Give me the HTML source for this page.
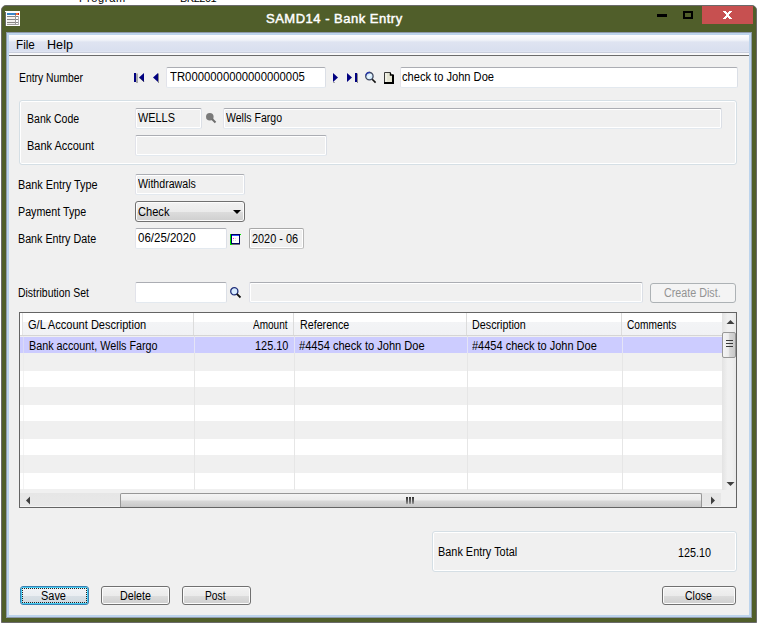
<!DOCTYPE html>
<html><head><meta charset="utf-8">
<style>
*{box-sizing:border-box;margin:0;padding:0}
html,body{width:760px;height:637px;overflow:hidden;background:#fff;position:relative}
body{font-family:"Liberation Sans",sans-serif}
.a{position:absolute}
.t{position:absolute;font-size:11px;line-height:13px;white-space:nowrap;color:#000}
.t.s{font-size:12px;transform-origin:0 0}
.frame{left:1px;top:5px;width:756px;height:618px;background:#505e2a;border:1px solid #6a6a6a;border-radius:5px 5px 0 0}
.client{left:6px;top:32px;width:746px;height:586px;background:#f0f0f0;border:1px solid #8e9aab}
.client-in{left:7px;top:33px;width:744px;height:584px;border:2px solid #bdd4ec}
.menu{left:9px;top:35px;width:740px;height:20px;background:linear-gradient(#fdfdfe 0,#f1f3f9 5px,#dfe4f1 7px,#d9dfef 16px,#e4e8f3 17px,#c9cedc 17px,#c9cedc 18px,#f8f8fa 18px)}
.tb{position:absolute;background:#fff;border:1px solid #abadb3;border-left-color:#e2e3ea;border-right-color:#dbdfe6;border-bottom-color:#e3e9ef;border-radius:2px;box-shadow:inset 0 0 0 1px #fff}
.tb.dis{background:#f0f0f0}
.grp{position:absolute;border:1px solid #d5dfe5;border-radius:3px;box-shadow:inset 0 0 0 1px #fff}
.btn{position:absolute;border:1px solid #707070;border-radius:3px;background:linear-gradient(#f2f2f2 0,#ebebeb 50%,#dddddd 50%,#cfcfcf 100%);box-shadow:inset 0 0 0 1px #fcfcfc}
</style></head><body>

<!-- background window text fragment -->
<div class="t" style="left:79px;top:-8px;color:#000;letter-spacing:0.65px">Program</div>
<div class="t" style="left:180px;top:-8px;color:#000;letter-spacing:-0.5px">BK2201</div>

<!-- window frame -->
<div class="a frame"></div>
<div class="a client"></div>
<div class="a client-in"></div>

<!-- title bar -->
<svg class="a" style="left:5px;top:11px" width="16" height="16" viewBox="0 0 16 16" shape-rendering="crispEdges">
 <rect x="0" y="0" width="15" height="15" fill="#fdfdfd"/>
 <rect x="0" y="1" width="1" height="14" fill="#6a6a6a"/>
 <rect x="2" y="2" width="8" height="2" fill="#3a86c8"/>
 <rect x="10" y="2" width="1" height="2" fill="#5a60a0"/>
 <rect x="11" y="2" width="2" height="2" fill="#f07a30"/>
 <rect x="13" y="2" width="1" height="2" fill="#d01818"/>
 <rect x="2" y="6" width="8" height="2" fill="#f6f2ee"/>
 <rect x="2" y="9" width="8" height="2" fill="#f2f0ee"/>
 <rect x="2" y="12" width="8" height="1" fill="#eeeeee"/>
 <rect x="2" y="5" width="12" height="1" fill="#8a8684"/>
 <rect x="2" y="8" width="12" height="1" fill="#8a8684"/>
 <rect x="2" y="11" width="12" height="1" fill="#8a8684"/>
 <rect x="2" y="13" width="12" height="1" fill="#a09c9a"/>
 <rect x="10" y="4" width="1" height="10" fill="#9a9a9a"/>
 <rect x="13" y="5" width="1" height="9" fill="#b0b0b0"/>
</svg>
<div class="a" style="left:657px;top:14px;width:10px;height:3px;background:#000"></div>
<div class="a" style="left:683px;top:11px;width:10px;height:8px;border:2px solid #000;border-width:2px 2px 2px 2px"></div>
<div class="a" style="left:702px;top:6px;width:51px;height:18px;background:#c75050"></div>
<svg class="a" style="left:723px;top:11px" width="9" height="8" viewBox="0 0 9 8" shape-rendering="crispEdges" fill="#fff"><rect x="0" y="0" width="3" height="1"/><rect x="6" y="0" width="3" height="1"/><rect x="1" y="1" width="3" height="1"/><rect x="5" y="1" width="3" height="1"/><rect x="2" y="2" width="5" height="1"/><rect x="3" y="3" width="3" height="1"/><rect x="3" y="4" width="3" height="1"/><rect x="2" y="5" width="5" height="1"/><rect x="1" y="6" width="3" height="1"/><rect x="5" y="6" width="3" height="1"/><rect x="0" y="7" width="3" height="1"/><rect x="6" y="7" width="3" height="1"/></svg>
<div class="t" style="left:266px;top:11px;font-size:13px;line-height:15px;color:#fff;letter-spacing:0.5px;-webkit-text-stroke:0.45px #fff">SAMD14 - Bank Entry</div>

<!-- menu -->
<div class="a menu"></div>
<div class="a" style="left:9px;top:55px;width:740px;height:1px;background:#6b6b6b"></div>
<div class="t s" style="left:15.53px;top:39px;transform:scaleX(0.9722)">File</div>
<div class="t s" style="left:47.35px;top:39px;transform:scaleX(1.0522)">Help</div>

<!-- Entry number row -->
<div class="t s" style="left:18.64px;top:72px;transform:scaleX(0.8644)">Entry Number</div>
<svg class="a" style="left:133px;top:72px" width="14" height="12" viewBox="0 0 14 12">
 <rect x="3" y="1.5" width="2" height="9.5" fill="#a8a8a8"/>
 <rect x="1" y="1" width="2" height="9" fill="#000080"/>
 <polygon points="11,1 11,10 6,5.5" fill="#000080"/>
 <polygon points="11,10 6,5.5 6.5,5.5 11.5,10" fill="#303030"/>
</svg>
<svg class="a" style="left:151px;top:72px" width="10" height="12" viewBox="0 0 10 12">
 <polygon points="7,1 7,10 2,5.5" fill="#000080"/>
 <rect x="7" y="1.5" width="1" height="9.5" fill="#8a8a8a"/>
</svg>
<div class="tb" style="left:166px;top:67px;width:160px;height:21px"></div>
<div class="t s" style="left:170.00px;top:71px;transform:scaleX(0.9437)">TR0000000000000000005</div>
<svg class="a" style="left:332px;top:72px" width="8" height="12" viewBox="0 0 8 12">
 <polygon points="1,1 1,10 6,5.5" fill="#000080"/>
 <rect x="1.5" y="10" width="1" height="1" fill="#606060"/>
</svg>
<svg class="a" style="left:346px;top:72px" width="14" height="12" viewBox="0 0 14 12">
 <polygon points="1,1 1,10 6,5.5" fill="#000080"/>
 <rect x="9" y="1" width="2" height="9" fill="#000080"/>
 <rect x="11" y="1.5" width="1" height="9.5" fill="#8a8a8a"/>
</svg>
<svg class="a" style="left:364px;top:71px" width="13" height="13" viewBox="0 0 13 13">
 <circle cx="5.4" cy="5.2" r="3.7" fill="#d4ecfc" stroke="#404860" stroke-width="1.3"/>
 <path d="M2 4.5 A3.7 3.7 0 0 1 6 1.5" fill="none" stroke="#2838b0" stroke-width="1.3"/>
 <path d="M4 6.5 L7 3.5" stroke="#fff" stroke-width="1.2" opacity=".8"/>
 <line x1="8.2" y1="8.2" x2="11.6" y2="11.6" stroke="#111" stroke-width="1.6"/>
</svg>
<svg class="a" style="left:383px;top:71px" width="12" height="14" viewBox="0 0 12 14">
 <path d="M1.5 1.5 H7.5 L10 4 V12 H1.5 Z" fill="#e4e4d2"/>
 <rect x="2" y="2" width="2" height="9" fill="#f0f0e6"/>
 <path d="M1.5 11.5 V1.5 H7.5" fill="none" stroke="#3a3a3a" stroke-width="1"/>
 <path d="M7.5 1.5 V4 H10" fill="none" stroke="#000" stroke-width="1.4"/>
 <path d="M8.3 1.2 L10.6 3.5" stroke="#fff" stroke-width="1.2"/>
 <path d="M10 3.5 V12 H1" fill="none" stroke="#000" stroke-width="2"/>
</svg>
<div class="tb" style="left:400px;top:67px;width:338px;height:21px"></div>
<div class="t s" style="left:401.67px;top:71px;transform:scaleX(0.9255)">check to John Doe</div>

<!-- Bank group -->
<div class="grp" style="left:19px;top:100px;width:718px;height:65px"></div>
<div class="t s" style="left:27.12px;top:113px;transform:scaleX(0.8793)">Bank Code</div>
<div class="tb dis" style="left:135px;top:108px;width:67px;height:21px"></div>
<div class="t s" style="left:138.00px;top:112px;transform:scaleX(0.9075)">WELLS</div>
<svg class="a" style="left:205px;top:112px" width="12" height="12" viewBox="0 0 12 12">
 <circle cx="4.8" cy="4.8" r="3.8" fill="#7a7a7a"/>
 <line x1="7" y1="7" x2="10.5" y2="10.5" stroke="#6e6e6e" stroke-width="2"/>
</svg>
<div class="tb dis" style="left:223px;top:108px;width:499px;height:21px"></div>
<div class="t s" style="left:226.00px;top:112px;transform:scaleX(0.8778)">Wells Fargo</div>
<div class="t s" style="left:27.09px;top:140px;transform:scaleX(0.9139)">Bank Account</div>
<div class="tb dis" style="left:135px;top:135px;width:192px;height:21px"></div>

<!-- Bank entry type etc -->
<div class="t s" style="left:18.39px;top:179px;transform:scaleX(0.9058)">Bank Entry Type</div>
<div class="tb dis" style="left:135px;top:174px;width:110px;height:21px"></div>
<div class="t s" style="left:138.00px;top:178px;transform:scaleX(0.8846)">Withdrawals</div>

<div class="t s" style="left:18.41px;top:206px;transform:scaleX(0.8907)">Payment Type</div>
<div class="btn" style="left:135px;top:201px;width:110px;height:21px"></div>
<div class="t s" style="left:137.68px;top:206px;transform:scaleX(0.9242)">Check</div>
<svg class="a" style="left:232px;top:209px" width="10" height="7" viewBox="0 0 10 7">
 <polygon points="1,1 9,1 5,5" fill="#000"/>
</svg>

<div class="t s" style="left:18.41px;top:233px;transform:scaleX(0.8942)">Bank Entry Date</div>
<div class="tb" style="left:135px;top:228px;width:92px;height:21px"></div>
<div class="t s" style="left:138.00px;top:232px;transform:scaleX(0.9583)">06/25/2020</div>
<svg class="a" style="left:230px;top:234px" width="11" height="11" viewBox="0 0 11 11">
 <rect x="0" y="0" width="11" height="11" fill="#00e000"/>
 <rect x="1" y="0" width="9" height="10" fill="#000060"/>
 <rect x="2" y="1" width="7" height="1" fill="#3050ff"/>
 <rect x="2" y="2" width="7" height="7" fill="#fff"/>
 <rect x="3" y="4" width="1" height="1" fill="#ff00ff"/>
 <rect x="5" y="4" width="1" height="1" fill="#ddd"/>
 <rect x="3" y="6" width="1" height="1" fill="#ddd"/>
 <rect x="5" y="6" width="1" height="1" fill="#ddd"/>
 <rect x="10" y="1" width="1" height="10" fill="#f0f0f0"/>
 <rect x="1" y="10" width="10" height="1" fill="#f0f0f0"/>
 <rect x="10" y="0" width="1" height="1" fill="#00e000"/>
 <rect x="0" y="10" width="2" height="1" fill="#00e000"/>
 <rect x="2" y="10" width="8" height="1" fill="#707070"/>
</svg>
<div class="tb dis" style="left:249px;top:228px;width:55px;height:21px;border-color:#a8a8a8;border-bottom-color:#c8c8c8;border-right-color:#b8b8b8"></div>
<div class="t s" style="left:252.09px;top:233px;transform:scaleX(0.9082)">2020 - 06</div>

<!-- Distribution set -->
<div class="t s" style="left:18.43px;top:287px;transform:scaleX(0.8713)">Distribution Set</div>
<div class="tb" style="left:135px;top:282px;width:92px;height:21px"></div>
<svg class="a" style="left:229px;top:286px" width="13" height="13" viewBox="0 0 13 13">
 <circle cx="5.3" cy="5.3" r="3.6" fill="#d8ecff" stroke="#22307a" stroke-width="1.3"/>
 <line x1="7.8" y1="7.8" x2="11.5" y2="11.5" stroke="#111" stroke-width="1.8"/>
</svg>
<div class="tb dis" style="left:249px;top:282px;width:394px;height:21px"></div>
<div class="btn" style="left:650px;top:283px;width:86px;height:20px;border-color:#adb2b5;background:#f4f4f4;box-shadow:none"></div>
<div class="t s" style="left:663.80px;top:287px;transform:scaleX(0.8951);color:#939393">Create Dist.</div>

<!-- Grid -->
<div class="a" style="left:19px;top:312px;width:718px;height:196px;border:1px solid #646464;background:#f0f0f0"></div>
<!-- header -->
<div class="a" style="left:20px;top:313px;width:702px;height:23px;background:linear-gradient(#ffffff 0,#ffffff 9px,#f3f4f6 9px,#f1f2f4 22px,#d5d5d5 22px)"></div>
<div class="a" style="left:20px;top:313px;width:2px;height:22px;background:#fff"></div>
<div class="a" style="left:22px;top:313px;width:1px;height:22px;background:#e4e4e4"></div>
<div class="a" style="left:193px;top:313px;width:1px;height:22px;background:#dcdcdc"></div>
<div class="a" style="left:293px;top:313px;width:1px;height:22px;background:#dcdcdc"></div>
<div class="a" style="left:466px;top:313px;width:1px;height:22px;background:#dcdcdc"></div>
<div class="a" style="left:621px;top:313px;width:1px;height:22px;background:#dcdcdc"></div>
<div class="t s" style="left:28.08px;top:319px;transform:scaleX(0.9213)">G/L Account Description</div>
<div class="t s" style="left:252.60px;top:319px;transform:scaleX(0.8341)">Amount</div>
<div class="t s" style="left:299.81px;top:319px;transform:scaleX(0.8907)">Reference</div>
<div class="t s" style="left:472.30px;top:319px;transform:scaleX(0.8966)">Description</div>
<div class="t s" style="left:626.75px;top:319px;transform:scaleX(0.8491)">Comments</div>
<!-- rows -->
<div class="a" style="left:20px;top:336px;width:702px;height:154px;background:repeating-linear-gradient(#f0f0f0 0,#f0f0f0 1px,#ffffff 1px,#ffffff 17px,#f0f0f0 17px,#f0f0f0 34px)"></div>
<div class="a" style="left:20px;top:336px;width:702px;height:1px;background:#f0f0f0"></div>
<div class="a" style="left:20px;top:337px;width:702px;height:16px;background:#ccccff"></div>
<div class="a" style="left:23px;top:336px;width:1px;height:154px;background:#e8e8e8;opacity:.5"></div>
<div class="a" style="left:194px;top:336px;width:1px;height:154px;background:#e6e6e6"></div>
<div class="a" style="left:294px;top:336px;width:1px;height:154px;background:#e6e6e6"></div>
<div class="a" style="left:467px;top:336px;width:1px;height:154px;background:#e6e6e6"></div>
<div class="a" style="left:622px;top:336px;width:1px;height:154px;background:#e6e6e6"></div>
<div class="a" style="left:23px;top:337px;width:1px;height:16px;background:#dadaf6"></div>
<div class="a" style="left:194px;top:337px;width:1px;height:16px;background:#e4e4f6"></div>
<div class="a" style="left:294px;top:337px;width:1px;height:16px;background:#e4e4f6"></div>
<div class="a" style="left:467px;top:337px;width:1px;height:16px;background:#e4e4f6"></div>
<div class="a" style="left:622px;top:337px;width:1px;height:16px;background:#e4e4f6"></div>
<div class="t s" style="left:28.60px;top:340px;transform:scaleX(0.8979)">Bank account, Wells Fargo</div>
<div class="t s" style="left:254.69px;top:340px;transform:scaleX(0.9086)">125.10</div>
<div class="t s" style="left:299.08px;top:340px;transform:scaleX(0.9230)">#4454 check to John Doe</div>
<div class="t s" style="left:472.28px;top:340px;transform:scaleX(0.9170)">#4454 check to John Doe</div>
<!-- vertical scrollbar -->
<div class="a" style="left:722px;top:313px;width:14px;height:178px;background:linear-gradient(90deg,#e3e3e3,#f0f0f0 40%,#f0f0f0 70%,#e8e8e8)"></div>
<svg class="a" style="left:725px;top:318px" width="11" height="8" viewBox="0 0 11 8">
 <polygon points="1.5,6 5.5,2 9.5,6" fill="#404040"/>
</svg>
<div class="a" style="left:722px;top:332px;width:14px;height:26px;border:1px solid #979797;border-radius:2px;background:linear-gradient(90deg,#f4f4f4,#ececec 45%,#d8d8d8 55%,#c8c8c8)"></div>
<div class="a" style="left:726px;top:340px;width:7px;height:1px;background:#3a3a3a"></div>
<div class="a" style="left:726px;top:343px;width:7px;height:1px;background:#3a3a3a"></div>
<div class="a" style="left:726px;top:346px;width:7px;height:1px;background:#3a3a3a"></div>
<svg class="a" style="left:725px;top:480px" width="11" height="8" viewBox="0 0 11 8">
 <polygon points="1.5,2 5.5,6 9.5,2" fill="#404040"/>
</svg>
<!-- horizontal scrollbar -->
<div class="a" style="left:20px;top:490px;width:702px;height:17px;background:linear-gradient(#f0f0f0 0,#f0f0f0 3px,#e6e6e6 3px,#e8e8e8 16px,#f4f4f4 16px)"></div>
<div class="a" style="left:721px;top:490px;width:15px;height:17px;background:#f0f0f0"></div>
<svg class="a" style="left:24px;top:495px" width="8" height="11" viewBox="0 0 8 11">
 <polygon points="6,1.5 2,5.5 6,9.5" fill="#404040"/>
</svg>
<div class="a" style="left:120px;top:493px;width:582px;height:14px;border:1px solid #979797;border-bottom:none;border-radius:2px 2px 0 0;background:linear-gradient(#f4f4f4,#ececec 45%,#d8d8d8 55%,#c8c8c8)"></div>
<div class="a" style="left:406px;top:497px;width:2px;height:7px;background:linear-gradient(#303030,#707070 70%,#a0a0a0)"></div>
<div class="a" style="left:409px;top:497px;width:2px;height:7px;background:linear-gradient(#303030,#707070 70%,#a0a0a0)"></div>
<div class="a" style="left:412px;top:497px;width:2px;height:7px;background:linear-gradient(#303030,#707070 70%,#a0a0a0)"></div>
<svg class="a" style="left:709px;top:495px" width="8" height="11" viewBox="0 0 8 11">
 <polygon points="2,1.5 6,5.5 2,9.5" fill="#404040"/>
</svg>

<!-- Total group -->
<div class="grp" style="left:432px;top:531px;width:305px;height:41px"></div>
<div class="t s" style="left:437.89px;top:546px;transform:scaleX(0.9082)">Bank Entry Total</div>
<div class="t s" style="left:678.40px;top:547px;transform:scaleX(0.8971)">125.10</div>

<!-- Buttons -->
<div class="btn" style="left:20px;top:586px;width:69px;height:19px;border-color:#3c7fb1;background:linear-gradient(#f0f3f6 0,#eaeef2 50%,#d8e0e6 50%,#d0d9e0 100%);box-shadow:inset 0 0 0 1px #45cff5"></div>
<div class="a" style="left:22px;top:588px;width:65px;height:15px;border:1px dotted #202020"></div>
<div class="t s" style="left:41.49px;top:590px;transform:scaleX(0.9115)">Save</div>
<div class="btn" style="left:101px;top:586px;width:69px;height:19px"></div>
<div class="t s" style="left:119.71px;top:590px;transform:scaleX(0.8909)">Delete</div>
<div class="btn" style="left:182px;top:586px;width:69px;height:19px"></div>
<div class="t s" style="left:205.44px;top:590px;transform:scaleX(0.8565)">Post</div>
<div class="btn" style="left:662px;top:586px;width:74px;height:19px"></div>
<div class="t s" style="left:685.13px;top:590px;transform:scaleX(0.8724)">Close</div>

</body></html>
